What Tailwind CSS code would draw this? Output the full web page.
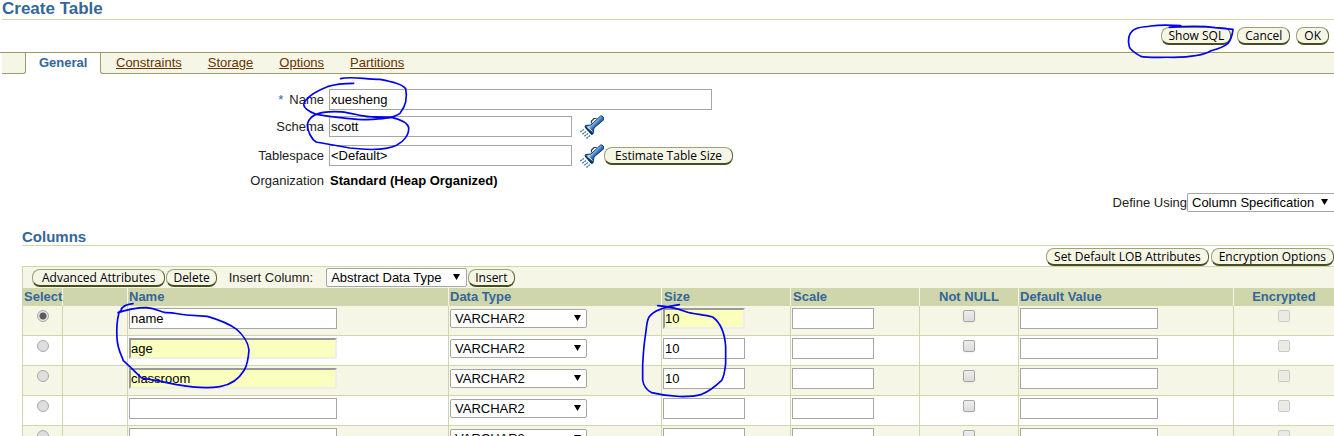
<!DOCTYPE html>
<html lang="en">
<head>
<meta charset="utf-8">
<title>Create Table</title>
<script src="https://cdn.jsdelivr.net/npm/@tailwindcss/browser@4"></script>
</head>
<body class="bg-white">
<svg class="absolute size-0" aria-hidden="true">
  <defs>
    <linearGradient id="metal" gradientUnits="userSpaceOnUse" x1="9" y1="6" x2="16" y2="13">
      <stop offset="0.2" stop-color="#3a75b5"/><stop offset="0.4" stop-color="#b4d8f5"/><stop offset="0.7" stop-color="#3f7fc2"/><stop offset="1" stop-color="#1d4f8c"/>
    </linearGradient>
    <symbol id="torch" viewBox="0 0 24 24">
      <path d="M20.500 1h1.500l2 2v1.500L14 13l-1 6-1.500 .5L5 12l.5-1.500 5.500-.5z" fill="url(#metal)" stroke="#12386b" stroke-width="1"/>
      <path d="M5.500 12l6.500 7" stroke="#0c2c58" stroke-width="1.400"/>
      <path d="M11.500 8.500V6l2.500-2.500h2.500" fill="none" stroke="#12386b" stroke-width="1.200"/>
      <path d="M8 12l4.500 4.500" stroke="#dceefb" stroke-width="1"/>
      <path d="M4 14.500l-4 2.500M6 16.500l-4 3M8 18.500l-4 3M10 20.500l-3.500 3" stroke="#3f78ab" stroke-width="1.300" stroke-dasharray="2 .6"/>
    </symbol>
  </defs>
</svg>
<div class="relative h-screen overflow-hidden font-['Liberation_Sans',Arial,sans-serif] text-[13px] leading-[18px] text-[#222]">

  <header class="relative pl-[2px]">
    <h1 class="h-5 border-b border-[#d0d6ac] text-[17px] font-bold leading-[17px] text-[#336699]">Create Table</h1>
    <div class="flex h-8 items-start justify-end gap-1.5 pr-[5px] pt-[7px]">
      <button class="h-[18px] rounded-lg border border-b-2 border-[#9ca378] border-r-[#5b6234] border-b-[#474e1e] bg-[#f6f6e6] px-1.5 font-['Open_Sans',sans-serif] text-xs leading-[15px] text-black">Show SQL</button>
      <button class="h-[18px] rounded-lg border border-b-2 border-[#9ca378] border-r-[#5b6234] border-b-[#474e1e] bg-[#f6f6e6] px-[7px] font-['Open_Sans',sans-serif] text-xs leading-[15px] text-black">Cancel</button>
      <button class="h-[18px] rounded-lg border border-b-2 border-[#9ca378] border-r-[#5b6234] border-b-[#474e1e] bg-[#f6f6e6] px-[7px] font-['Open_Sans',sans-serif] text-xs leading-[15px] text-black">OK</button>
    </div>
    <svg class="pointer-events-none absolute right-0 top-0 z-10 h-20 w-[234px]" viewBox="0 0 702 240" fill="none" stroke="#0000f0" stroke-width="5" stroke-linecap="round" stroke-linejoin="round"><path d="M208 82C250 79 310 77 345 83L399 88C397 104 391 122 384 130C370 143 350 147 333 152C310 166 270 171 220 172C180 171 145 174 122 169C108 160 92 152 88 140C83 120 84 104 98 92C110 80 130 82 152 78C180 74 215 75 242 77"/></svg>
  </header>

  <nav class="flex h-[22px] border-t border-[#999966] pl-[2px] leading-5" aria-label="Sections">
    <div class="w-6 rounded-br-[3px] border-b border-r border-[#999f72] bg-[#f6f6e6]"></div>
    <div class="w-[74px] pl-[13px] font-bold text-[#336699]">General</div>
    <div class="flex flex-1 gap-[26px] rounded-bl-[3px] border-b border-l border-[#999f72] bg-[#f6f6e6] pl-[15px]">
      <a href="#constraints" class="text-[#663300] underline">Constraints</a>
      <a href="#storage" class="text-[#663300] underline">Storage</a>
      <a href="#options" class="text-[#663300] underline">Options</a>
      <a href="#partitions" class="text-[#663300] underline">Partitions</a>
    </div>
  </nav>

  <section class="relative pt-[15px]">
    <div class="flex items-center gap-[5px]">
      <label for="name" class="w-[324px] text-right"><span class="mr-1.5 text-[#336699]">*</span>Name</label>
      <input id="name" value="xuesheng" class="h-[21px] w-[383px] border border-[#a6a6a6] px-px text-black">
    </div>
    <div class="mt-1.5 flex items-center gap-[5px]">
      <label for="schema" class="w-[324px] text-right">Schema</label>
      <input id="schema" value="scott" class="h-[21px] w-[243px] border border-[#a6a6a6] px-px text-black">
      <button aria-label="Search schemas" class="ml-[3px] flex h-[21px] w-6 items-center"><svg class="size-6 shrink-0"><use href="#torch"/></svg></button>
    </div>
    <div class="mt-2 flex items-center">
      <label for="tablespace" class="mr-[5px] w-[324px] text-right">Tablespace</label>
      <input id="tablespace" value="&lt;Default&gt;" class="h-[21px] w-[243px] border border-[#a6a6a6] px-px text-black">
      <button aria-label="Search tablespaces" class="ml-2 flex h-[21px] w-6 items-center"><svg class="size-6 shrink-0"><use href="#torch"/></svg></button>
      <button class="h-[18px] rounded-lg border border-b-2 border-[#9ca378] border-r-[#5b6234] border-b-[#474e1e] bg-[#f6f6e6] px-2.5 font-['Open_Sans',sans-serif] text-xs leading-[15px] text-black">Estimate Table Size</button>
    </div>
    <div class="mt-1.5 flex gap-1.5">
      <span class="w-[324px] text-right">Organization</span>
      <span class="font-bold text-black">Standard (Heap Organized)</span>
    </div>
    <svg class="pointer-events-none absolute left-[240px] top-[-4px] z-10 h-[125px] w-[300px]" viewBox="0 0 900 375" fill="none" stroke="#0000f0" stroke-width="5" stroke-linecap="round" stroke-linejoin="round"><path d="M302 26C330 18 370 27 420 28C460 36 485 42 497 56C503 85 496 110 480 130C460 145 420 147 380 149C330 149 280 141 228 133C205 124 192 116 191 104C196 82 225 65 262 50C290 41 315 40 341 40"/><path d="M379 140L455 142C480 148 503 156 506 173C508 195 490 215 470 226C440 240 380 240 330 234L228 216C215 208 203 185 202 165C205 145 220 132 250 127C300 120 330 130 365 137C400 142 430 146 455 142"/></svg>
  </section>

  <div class="mt-[3px] flex items-center justify-end">
    <label for="define">Define Using</label>
    <div class="relative">
      <select id="define" class="block h-[19px] w-[147px] appearance-none rounded-l-[2px] border border-r-0 border-[#a6a6a6] bg-white pl-1 leading-[16px] text-black"><option>Column Specification</option></select>
      <svg class="pointer-events-none absolute right-[6px] top-[6px] h-[6px] w-[7px]" viewBox="0 0 7 6"><path d="M0 0h7L3.500 6z"/></svg>
    </div>
  </div>

  <section class="relative pl-[22px]">
    <h2 class="h-[34px] border-b border-[#d0d6ac] pt-4 text-[15px] font-bold text-[#336699]">Columns</h2>
    <div class="mt-[2px] flex justify-end gap-[2px]">
      <button class="h-[18px] rounded-lg border border-b-2 border-[#9ca378] border-r-[#5b6234] border-b-[#474e1e] bg-[#f6f6e6] px-[7px] font-['Open_Sans',sans-serif] text-xs leading-[15px] text-black">Set Default LOB Attributes</button>
      <button class="h-[18px] rounded-lg border border-b-2 border-[#9ca378] border-r-[#5b6234] border-b-[#474e1e] bg-[#f6f6e6] px-[7px] font-['Open_Sans',sans-serif] text-xs leading-[15px] text-black">Encryption Options</button>
    </div>
    <div class="flex h-[22px] items-center border-l border-t border-[#d0d6ac] bg-[#f6f6e6] pl-[9px]">
      <button class="h-[18px] rounded-lg border border-b-2 border-[#9ca378] border-r-[#5b6234] border-b-[#474e1e] bg-[#f6f6e6] px-[9px] font-['Open_Sans',sans-serif] text-xs leading-[15px] text-black">Advanced Attributes</button>
      <button class="ml-px h-[18px] rounded-lg border border-b-2 border-[#9ca378] border-r-[#5b6234] border-b-[#474e1e] bg-[#f6f6e6] px-1.5 font-['Open_Sans',sans-serif] text-xs leading-[15px] text-black">Delete</button>
      <label for="insert" class="ml-3">Insert Column:</label>
      <div class="relative ml-[13px]">
        <select id="insert" class="block h-[19px] w-[141px] appearance-none rounded-[2px] border border-[#a6a6a6] bg-white pl-1 leading-[16px] text-black"><option>Abstract Data Type</option></select>
        <svg class="pointer-events-none absolute right-[7px] top-[6px] h-[6px] w-[7px]" viewBox="0 0 7 6"><path d="M0 0h7L3.500 6z"/></svg>
      </div>
      <button class="ml-px h-[18px] rounded-lg border border-b-2 border-[#9ca378] border-r-[#5b6234] border-b-[#474e1e] bg-[#f6f6e6] px-1.5 font-['Open_Sans',sans-serif] text-xs leading-[15px] text-black">Insert</button>
    </div>

    <table class="w-full table-fixed border-separate border-spacing-0">
      <colgroup>
        <col class="w-10"><col class="w-[65px]"><col><col class="w-[213px]"><col class="w-[129px]"><col class="w-[129px]"><col class="w-[99px]"><col class="w-[215px]"><col class="w-[101px]">
      </colgroup>
      <thead class="bg-[#d0d6ac] text-left text-[#336699]">
        <tr class="h-[18px]">
          <th class="border-l border-[#d0d6ac] p-0 pl-px">Select</th>
          <th class="border-l border-[#f6f6e6] p-0"></th>
          <th class="border-l border-[#f6f6e6] p-0 pl-px">Name</th>
          <th class="border-l border-[#f6f6e6] p-0 pl-px">Data Type</th>
          <th class="border-l border-[#f6f6e6] p-0 pl-[2px]">Size</th>
          <th class="border-l border-[#f6f6e6] p-0 pl-[2px]">Scale</th>
          <th class="border-l border-[#f6f6e6] p-0 text-center">Not NULL</th>
          <th class="border-l border-[#f6f6e6] p-0 pl-px">Default Value</th>
          <th class="border-l border-[#f6f6e6] p-0 text-center">Encrypted</th>
        </tr>
      </thead>
      <tbody id="rows"></tbody>
    </table>
    <svg class="pointer-events-none absolute left-0 top-[88px] z-10 h-[136px] w-[350px] overflow-visible" viewBox="0 0 1050 408" fill="none" stroke="#0000f0" stroke-width="5" stroke-linecap="round" stroke-linejoin="round"><path d="M399 11C380 13 365 18 363 32L354 38C380 30 410 22 440 23C465 26 475 32 497 38C520 37 535 43 560 45L622 49C660 60 690 73 710 88C730 105 745 130 747 150C745 175 742 195 733 210C715 240 690 255 660 260C620 266 570 261 530 254L470 242L425 234C410 220 390 200 370 182C365 165 353 150 351 115C349 85 351 60 357 38L363 32"/></svg>
    <svg class="pointer-events-none absolute left-[430px] top-[73px] z-10 h-[151px] w-[350px]" viewBox="0 0 1050 453" fill="none" stroke="#0000f0" stroke-width="5" stroke-linecap="round" stroke-linejoin="round"><path d="M683 62C710 64 740 70 768 80C790 88 820 88 848 96C870 112 884 140 887 185V235C885 255 882 275 875 286C855 305 835 320 815 328C780 338 720 337 665 323C650 315 640 300 638 285V240C640 200 643 170 647 145C650 125 650 108 657 96C670 78 700 66 748 59"/></svg>
  </section>
</div>

<script>
const plain = 'h-[21px] border border-[#a6a6a6] bg-white px-px text-black block';
const edited = 'h-[21px] border-2 border-t-[#999] border-l-[#999] border-r-[#eee] border-b-[#eee] bg-[#faffbd] text-black block';
const rows = [
  { name: 'name', size: '10', sizeEdited: true, picked: true },
  { name: 'age', size: '10', nameEdited: true },
  { name: 'classroom', size: '10', nameEdited: true },
  { name: '', size: '' },
  { name: '', size: '' },
];
document.getElementById('rows').innerHTML = rows.map((r, i) => `
  <tr class="h-[30px] align-top odd:bg-[#f6f6e6] even:bg-white">
    <td class="border-b border-l border-[#d0d6ac] p-0 pt-1"><input type="radio" name="pick" aria-label="Select row ${i + 1}" ${r.picked ? 'checked' : ''} class="mx-auto block size-3 appearance-none rounded-full border border-[#a9a9a9] bg-[#dedede] checked:bg-[radial-gradient(circle,#5a5a5a_0_3px,#e2e2e2_4px)]"></td>
    <td class="border-b border-l border-[#d0d6ac] p-0"></td>
    <td class="border-b border-l border-[#d0d6ac] p-0 pl-px pt-[2px]"><input aria-label="Name ${i + 1}" value="${r.name}" class="w-[208px] ${r.nameEdited ? edited : plain}"></td>
    <td class="border-b border-l border-[#d0d6ac] p-0 pl-px pt-[3px]"><div class="relative w-[137px]"><select aria-label="Data type ${i + 1}" class="block h-[19px] w-full appearance-none rounded-[2px] border border-[#a6a6a6] bg-white pl-1 leading-[16px] text-black"><option>VARCHAR2</option></select><svg class="pointer-events-none absolute right-[6px] top-[6px] h-[6px] w-[7px]" viewBox="0 0 7 6"><path d="M0 0h7L3.500 6z"/></svg></div></td>
    <td class="border-b border-l border-[#d0d6ac] p-0 pl-px pt-[2px]"><input aria-label="Size ${i + 1}" value="${r.size}" class="w-[82px] ${r.sizeEdited ? edited : plain}"></td>
    <td class="border-b border-l border-[#d0d6ac] p-0 pl-px pt-[2px]"><input aria-label="Scale ${i + 1}" class="w-[82px] ${plain}"></td>
    <td class="border-b border-l border-[#d0d6ac] p-0 pt-1"><input type="checkbox" aria-label="Not NULL ${i + 1}" class="mx-auto block size-3 appearance-none rounded-[2px] border border-[#a6a6a6] bg-linear-to-b from-[#eee] to-[#dcdcdc] shadow-xs"></td>
    <td class="border-b border-l border-[#d0d6ac] p-0 pl-px pt-[2px]"><input aria-label="Default value ${i + 1}" class="w-[138px] ${plain}"></td>
    <td class="border-b border-l border-[#d0d6ac] p-0 pt-1"><input type="checkbox" disabled aria-label="Encrypted ${i + 1}" class="mx-auto block size-3 appearance-none rounded-[2px] border border-[#cbcbc6] bg-[#ebebe6]"></td>
  </tr>`).join('');
</script>
</body>
</html>
